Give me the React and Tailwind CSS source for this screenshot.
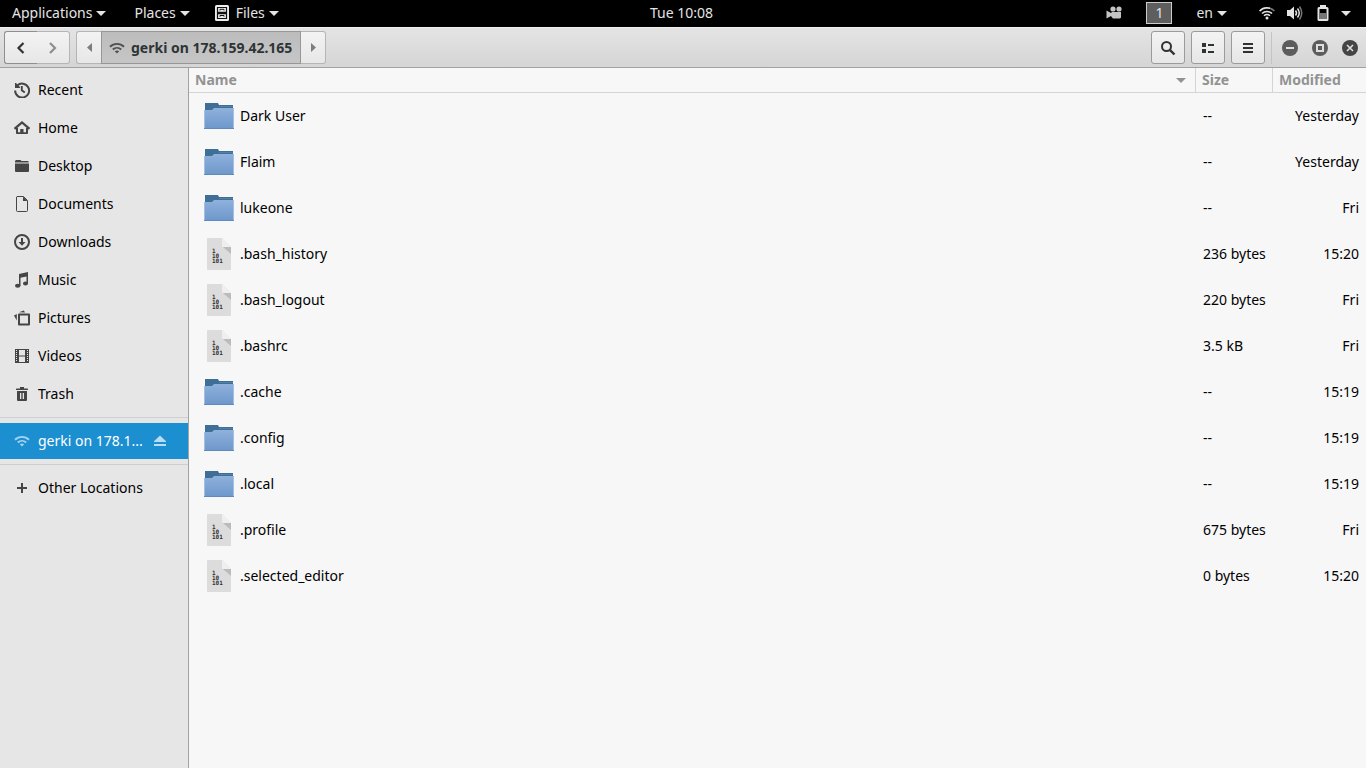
import { useState } from 'react';

const PLACES = [
    { name: 'Recent', icon: RecentIcon },
    { name: 'Home', icon: HomeIcon },
    { name: 'Desktop', icon: DesktopIcon },
    { name: 'Documents', icon: DocumentIcon },
    { name: 'Downloads', icon: DownloadIcon },
    { name: 'Music', icon: MusicIcon },
    { name: 'Pictures', icon: PicturesIcon },
    { name: 'Videos', icon: VideosIcon },
    { name: 'Trash', icon: TrashIcon },
];

const FILES = [
    { name: 'Dark User', folder: true, size: '--', modified: 'Yesterday' },
    { name: 'Flaim', folder: true, size: '--', modified: 'Yesterday' },
    { name: 'lukeone', folder: true, size: '--', modified: 'Fri' },
    { name: '.bash_history', size: '236 bytes', modified: '15:20' },
    { name: '.bash_logout', size: '220 bytes', modified: 'Fri' },
    { name: '.bashrc', size: '3.5 kB', modified: 'Fri' },
    { name: '.cache', folder: true, size: '--', modified: '15:19' },
    { name: '.config', folder: true, size: '--', modified: '15:19' },
    { name: '.local', folder: true, size: '--', modified: '15:19' },
    { name: '.profile', size: '675 bytes', modified: 'Fri' },
    { name: '.selected_editor', size: '0 bytes', modified: '15:20' },
];

/* Icons */
function Icon({ children, className = '' }) {
    return (
        <svg className={`size-4 shrink-0 ${className}`} viewBox="0 0 16 16" fill="currentColor" aria-hidden="true">
            {children}
        </svg>
    );
}

function RecentIcon() {
    return (
        <Icon>
            <path d="M3.2 3.6A7 7 0 1 1 1.1 8.6" fill="none" stroke="currentColor" strokeWidth="2" />
            <path d="M1 1v5h5V5L4.6 3.8 2 1z" />
            <path d="M7.8 4v4.2l3 2.3" fill="none" stroke="currentColor" strokeWidth="1.9" />
        </Icon>
    );
}

function HomeIcon() {
    return (
        <Icon>
            <path d="M.5 8.8 8 2.4l7.5 6.4" fill="none" stroke="currentColor" strokeWidth="2.2" />
            <path d="M2 8v5.2c0 .5.3.8.8.8h10.4c.5 0 .8-.3.8-.8V8h-2v4.2H9.500V9h-3v3.200H4V8z" />
            <path d="M6.500 9H8v3.200H6.500z" />
        </Icon>
    );
}

function DesktopIcon() {
    return (
        <Icon>
            <path d="M1 4.500V3l1-1h4.500l1 1H14l.6.6v.9z" />
            <path d="M1 5.500h14V13a1 1 0 0 1-1 1H2a1 1 0 0 1-1-1z" />
        </Icon>
    );
}

function DocumentIcon() {
    return (
        <Icon>
            <path d="M3 .5h6.500l4 4v10a1 1 0 0 1-1 1h-9a1 1 0 0 1-1-1V1z" fill="none" stroke="currentColor" />
            <path d="M9 .5v4.500h4.500z" />
        </Icon>
    );
}

function DownloadIcon() {
    return (
        <Icon>
            <circle cx="8" cy="8" r="7" fill="none" stroke="currentColor" strokeWidth="2" />
            <path d="M7 4h2v4h2.500L8 11.800 4.500 8H7z" />
        </Icon>
    );
}

function MusicIcon() {
    return (
        <Icon>
            <path d="M5 2 14 0v11.500h-1.500V4.500L6.500 5.800V14H5z" />
            <ellipse cx="3.700" cy="13.800" rx="2.700" ry="2" />
            <ellipse cx="11.500" cy="11.500" rx="2.500" ry="2" />
        </Icon>
    );
}

function PicturesIcon() {
    return (
        <Icon>
            <path d="M5 4.500h10v10H5z" fill="none" stroke="currentColor" strokeWidth="2" strokeLinejoin="round" />
            <path d="M5 2.300 9.800.4l1.200 2.200z" />
            <path d="M0 5.500 2.800 4v6.500z" />
        </Icon>
    );
}

function VideosIcon() {
    return (
        <Icon>
            <path
                fillRule="evenodd"
                d="M1 1h14v14H1zM5 2v5.500h6V2zM5 8.500V14h6V8.500zM2 2v1h1V2zM2 4v1h1V4zM2 6v1h1V6zM2 8v1h1V8zM2 10v1h1v-1zM2 12v1h1v-1zM13 2v1h1V2zM13 4v1h1V4zM13 6v1h1V6zM13 8v1h1V8zM13 10v1h1v-1zM13 12v1h1v-1z"
            />
        </Icon>
    );
}

function TrashIcon() {
    return (
        <Icon>
            <path d="M3 2.500h3V1h4v1.500h3c.6 0 1 .4 1 1v.5H2v-.5c0-.6.4-1 1-1z" />
            <path fillRule="evenodd" d="M3 5h10v9a1 1 0 0 1-1 1H4a1 1 0 0 1-1-1zM6 7v6h1.300V7zM8.700 7v6H10V7z" />
        </Icon>
    );
}

function WifiIcon({ className }) {
    return (
        <Icon className={className}>
            <path d="M1 6.700a10 10 0 0 1 14 0M3.800 9.500a6.200 6.200 0 0 1 8.400 0" fill="none" stroke="currentColor" strokeWidth="1.900" />
            <path d="M5.800 11.300a3.500 3.500 0 0 1 4.400 0L8 13.600z" />
        </Icon>
    );
}

function EjectIcon() {
    return (
        <Icon>
            <path d="M8 2.500 14 8.300V9H2v-.7z" />
            <path d="M2 11h12v2H2z" />
        </Icon>
    );
}

function Caret() {
    return (
        <svg className="h-[5px] w-[10px] shrink-0" viewBox="0 0 10 5" fill="currentColor" aria-hidden="true">
            <path d="M0 0h10L5 5z" />
        </svg>
    );
}

function FolderIcon() {
    return (
        <svg className="size-8 shrink-0" viewBox="0 0 32 32" aria-hidden="true">
            <defs>
                <linearGradient id="folder" x1="0" y1="0" x2="0" y2="1">
                    <stop offset="0" stopColor="#8fb1dc" />
                    <stop offset="1" stopColor="#6d97cb" />
                </linearGradient>
            </defs>
            <path d="M2 3h13l1 2h14v5H2z" fill="#3f6e96" />
            <path d="M16 6h14v1H16z" fill="#4f82a0" />
            <path d="M1 10h8l2-2h20v21H1z" fill="url(#folder)" />
            <path d="M1 28h30v1H1z" fill="#6089c0" />
            <path d="M1 10h1v18H1zM30 8h1v20h-1z" fill="#a3bfe2" />
        </svg>
    );
}

function BinaryIcon() {
    return (
        <svg className="size-8 shrink-0" viewBox="0 0 32 32" aria-hidden="true">
            <path d="M5 0h14l9 9v22a1 1 0 0 1-1 1H5a1 1 0 0 1-1-1V1a1 1 0 0 1 1-1z" fill="#dcdcdc" />
            <path d="M20 9h8v7z" fill="#bbb" />
            <path d="M19 0l9 9h-8a1 1 0 0 1-1-1z" fill="#efefef" />
            <g fill="#333" fontFamily="DejaVu Sans Mono, monospace" fontSize="6" fontWeight="700">
                <text x="9" y="15">1</text>
                <text x="9" y="20">10</text>
                <text x="9" y="25">101</text>
            </g>
        </svg>
    );
}

/* GNOME top panel */
function TopPanel() {
    return (
        <header className="flex h-[27px] items-center bg-black pb-px text-[#e4e4e4]">
            <div className="flex flex-1 items-center pl-3">
                <button className="flex items-center gap-1">Applications <Caret /></button>
                <button className="ml-7 flex items-center gap-1">Places <Caret /></button>
                <button className="ml-6 flex items-center gap-1">
                    <svg className="mr-[2px] size-4" viewBox="0 0 16 16" aria-hidden="true">
                        <rect x="1" y="0" width="14" height="16" rx="1.500" fill="#eee" />
                        <path d="M3.500 2.500h9v4.800h-9zM3.500 8.700h9v4.800h-9z" fill="none" stroke="#111" strokeWidth="1.200" />
                        <path d="M6 5.500V4.300h4v1.200M6 11.700v-1.200h4v1.200" fill="none" stroke="#111" />
                    </svg>
                    Files <Caret />
                </button>
            </div>
            <button>Tue 10:08</button>
            <div className="flex flex-1 items-center justify-end pr-[15px]">
                <button aria-label="Screen recorder" className="text-[#c4c4c4]">
                    <Icon>
                        <circle cx="7" cy="4" r="2.600" />
                        <circle cx="13" cy="4" r="2.600" />
                        <path d="M6 7h9v5.500l-1 1H7l-1-1-1-1.500-4.500 2.500V5.500L5 8z" />
                    </Icon>
                </button>
                <button className="ml-6 h-[22px] w-[26px] border border-[#ccc] bg-[#5e5e5e] leading-5">1</button>
                <button className="ml-6 flex items-center gap-1">en <Caret /></button>
                <button aria-label="System menu" className="ml-8 flex items-center gap-[10px]">
                    <span className="flex items-center gap-3">
                        <Icon>
                            <path d="M.6 6a10.500 10.500 0 0 1 14.800 0" fill="none" stroke="#777" strokeWidth="1.600" />
                            <path d="M.6 6A10.500 10.500 0 0 1 11 3.300M3 8.500a7 7 0 0 1 10 0M5 10.800a4.300 4.300 0 0 1 6 0" fill="none" stroke="currentColor" strokeWidth="1.500" />
                            <circle cx="8" cy="13" r="1.500" />
                        </Icon>
                        <Icon>
                            <path d="M0 5h3l4-3.500v13L3 11H0z" />
                            <path d="M8.500 5.500q2 2.500 0 5M10.500 3.500q3.500 4.500 0 9" fill="none" stroke="currentColor" strokeWidth="1.500" />
                            <path d="M12.500 1.500q4.500 6.500 0 13" fill="none" stroke="#777" strokeWidth="1.500" />
                        </Icon>
                        <Icon>
                            <path fillRule="evenodd" d="M5 0h6v2h1a1.500 1.500 0 0 1 1.500 1.500v11A1.500 1.500 0 0 1 12 16H4a1.500 1.500 0 0 1-1.500-1.500v-11A1.500 1.500 0 0 1 4 2h1zM4.500 4v10h7V4z" />
                            <path d="M4.500 8h7v6h-7z" fill="#777" />
                        </Icon>
                    </span>
                    <Caret />
                </button>
            </div>
        </header>
    );
}

function ToolButton({ label, children }) {
    return (
        <button
            aria-label={label}
            className="flex h-[33px] w-[34px] items-center justify-center rounded-[3px] border border-[#9b9b9b] bg-linear-to-b from-[#f3f3f3] to-[#e7e7e7] text-[#2e3436]"
        >
            {children}
        </button>
    );
}

function WindowButton({ label, dark, children }) {
    return (
        <button
            aria-label={label}
            className={`flex size-4 items-center justify-center rounded-full text-[#dedede] ${dark ? 'bg-[#454545]' : 'bg-[#5c5c5c]'}`}
        >
            <svg className="size-4" viewBox="0 0 16 16" fill="none" stroke="currentColor" strokeWidth="2" aria-hidden="true">
                {children}
            </svg>
        </button>
    );
}

function HeaderBar() {
    return (
        <div className="flex h-[41px] items-center border-t border-b border-t-[#f0f0f0] border-b-[#a1a1a1] bg-linear-to-b from-[#e4e4e4] to-[#d5d5d5] pr-2 pl-1">
            <div className="flex h-[33px]">
                <button
                    aria-label="Back"
                    className="flex w-[33px] items-center justify-center rounded-l-[3px] border-y border-l border-[#8f8f8f] bg-linear-to-b from-[#f3f3f3] to-[#e7e7e7] text-[#2e3436]"
                >
                    <Icon>
                        <path d="M10.500 3 5.500 8l5 5" fill="none" stroke="currentColor" strokeWidth="2.200" />
                    </Icon>
                </button>
                <button
                    aria-label="Forward"
                    className="flex w-[33px] items-center justify-center rounded-r-[3px] border-y border-r border-[#b5b5b5] bg-linear-to-b from-[#f3f3f3] to-[#e7e7e7] text-[#8b8e8f]"
                >
                    <Icon>
                        <path d="m5 3 5 5-5 5" fill="none" stroke="currentColor" strokeWidth="2.200" />
                    </Icon>
                </button>
            </div>
            <div className="ml-[6px] flex h-[33px] text-[#7d7d7d]">
                <button
                    aria-label="Scroll path left"
                    className="flex w-[25px] items-center justify-center rounded-l-[3px] border-y border-l border-[#b5b5b5] bg-linear-to-b from-[#f3f3f3] to-[#e7e7e7]"
                >
                    <svg className="h-[9px] w-[5px]" viewBox="0 0 5 9" fill="currentColor" aria-hidden="true"><path d="M5 0v9L0 4.500z" /></svg>
                </button>
                <button className="flex items-center gap-[6px] border border-[#979797] bg-linear-to-b from-[#bcbcbc] to-[#c6c6c6] pr-2 pl-[7px] font-bold text-[#2e3436]">
                    <WifiIcon className="text-[#4d5052]" />
                    gerki on 178.159.42.165
                </button>
                <button
                    aria-label="Scroll path right"
                    className="flex w-[25px] items-center justify-center rounded-r-[3px] border-y border-r border-[#b5b5b5] bg-linear-to-b from-[#f3f3f3] to-[#e7e7e7]"
                >
                    <svg className="h-[9px] w-[5px]" viewBox="0 0 5 9" fill="currentColor" aria-hidden="true"><path d="M0 0v9l5-4.500z" /></svg>
                </button>
            </div>
            <div className="ml-auto flex items-center gap-[6px]">
                <ToolButton label="Search">
                    <Icon>
                        <circle cx="6.500" cy="6.500" r="4.500" fill="none" stroke="currentColor" strokeWidth="2" />
                        <path d="m9.800 9.800 4.700 4.700" fill="none" stroke="currentColor" strokeWidth="2.400" />
                    </Icon>
                </ToolButton>
                <ToolButton label="View options">
                    <Icon>
                        <path d="M2 3h4v4H2zM2 9h4v4H2zM8 4h6v2H8zM8 11h6v2H8z" />
                    </Icon>
                </ToolButton>
                <ToolButton label="Menu">
                    <Icon>
                        <path d="M3 3h10v2H3zM3 7h10v2H3zM3 11h10v2H3z" />
                    </Icon>
                </ToolButton>
                <div className="h-8 w-px bg-[#c4c4c4]" />
                <div className="ml-1 flex gap-[14px]">
                    <WindowButton label="Minimize"><path d="M4 8h8" /></WindowButton>
                    <WindowButton label="Maximize"><path d="M5 5h6v6H5z" /></WindowButton>
                    <WindowButton label="Close" dark><path d="m5 5 6 6M11 5l-6 6" strokeWidth="1.600" /></WindowButton>
                </div>
            </div>
        </div>
    );
}

function Sidebar() {
    return (
        <nav className="w-[189px] shrink-0 border-r border-[#a1a1a1] bg-[#e6e6e6] pt-[3px]">
            {PLACES.map(({ name, icon: PlaceIcon }) => (
                <a key={name} href="#" className="flex h-[38px] items-center gap-2 pl-[14px]">
                    <span className="text-[#454545]"><PlaceIcon /></span>
                    {name}
                </a>
            ))}
            <div className="mt-1 mb-[5px] h-px bg-[#cfcfcf]" />
            <div className="flex h-9 items-center justify-between bg-[#1c8fd1] pr-5 pl-[14px] text-white">
                <a href="#" className="flex items-center gap-2 whitespace-nowrap">
                    <WifiIcon className="text-[#a5d2ed]" />
                    gerki on 178.1...
                </a>
                <button aria-label="Eject" className="text-[#bbddf1]"><EjectIcon /></button>
            </div>
            <div className="mt-[5px] mb-1 h-px bg-[#cfcfcf]" />
            <a href="#" className="flex h-[38px] items-center gap-2 pl-[14px]">
                <span className="text-[#454545]">
                    <Icon><path d="M7 3h2v4h4v2H9v4H7V9H3V7h4z" /></Icon>
                </span>
                Other Locations
            </a>
        </nav>
    );
}

function FileTable() {
    const [descending, setDescending] = useState(false);
    const rows = descending ? [...FILES].reverse() : FILES;

    return (
        <table className="w-full table-fixed border-separate border-spacing-0">
            <thead>
                <tr className="h-[25px] text-left text-[#929292]">
                    <th className="border-r border-b border-[#d4d4d4] p-0">
                        <button
                            onClick={() => setDescending(!descending)}
                            className="flex w-full items-center justify-between pr-[9px] pl-[6px] font-bold"
                        >
                            Name <Caret />
                        </button>
                    </th>
                    <th className="w-[77px] border-r border-b border-[#d4d4d4] p-0">
                        <button className="pl-[6px] font-bold">Size</button>
                    </th>
                    <th className="w-[93px] border-b border-[#d4d4d4] p-0">
                        <button className="pl-[6px] font-bold">Modified</button>
                    </th>
                </tr>
            </thead>
            <tbody>
                {rows.map((file) => (
                    <tr key={file.name} className="h-[46px]">
                        <td className="p-0">
                            <div className="flex items-center gap-[5px] pl-[14px]">
                                {file.folder ? <FolderIcon /> : <BinaryIcon />}
                                {file.name}
                            </div>
                        </td>
                        <td className="p-0 pl-[7px] whitespace-nowrap">{file.size}</td>
                        <td className="p-0 pr-[7px] text-right">{file.modified}</td>
                    </tr>
                ))}
            </tbody>
        </table>
    );
}

export default function App() {
    return (
        <div className="flex min-h-screen flex-col bg-[#f7f7f7] font-['Noto_Sans',sans-serif] text-[14px] leading-5 text-black">
            <TopPanel />
            <HeaderBar />
            <div className="flex flex-1">
                <Sidebar />
                <main className="min-w-0 flex-1">
                    <FileTable />
                </main>
            </div>
        </div>
    );
}
